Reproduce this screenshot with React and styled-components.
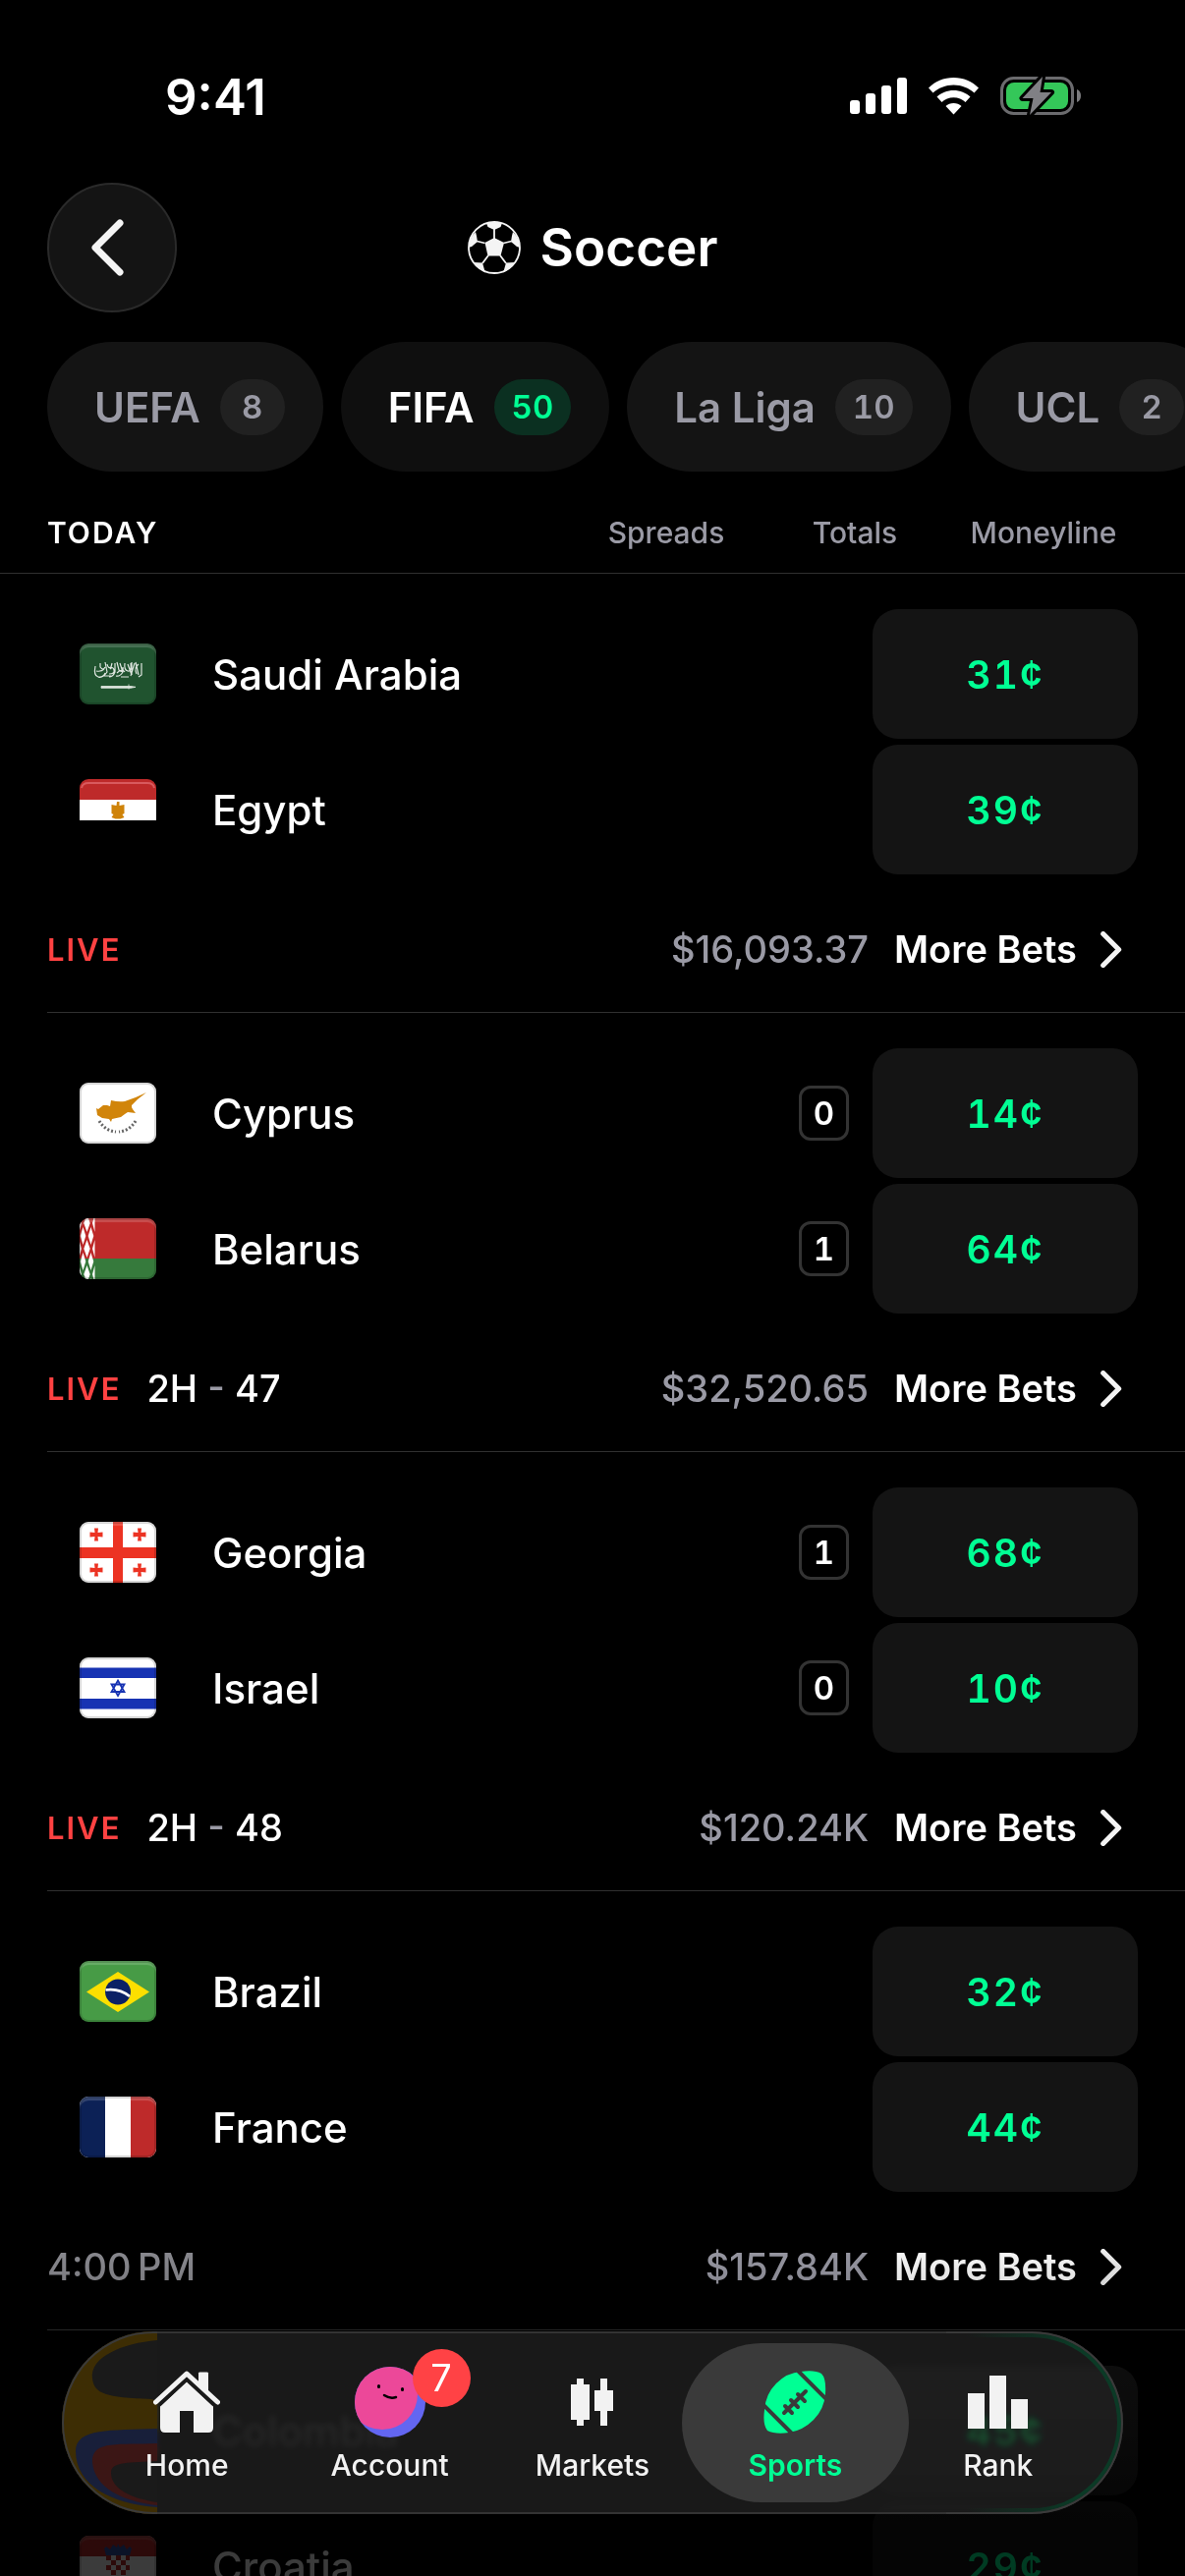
import { useState } from "react";
import styled, { createGlobalStyle } from "styled-components";

const GlobalStyle = createGlobalStyle`
  * {
    box-sizing: border-box;
  }
  body {
    margin: 0;
    background: #000;
    color: #fff;
    font-family: Inter, "Liberation Sans", sans-serif;
  }
  button {
    font-family: inherit;
    color: inherit;
    border: none;
    padding: 0;
    cursor: pointer;
  }
`;

const Screen = styled.div`
  position: relative;
  display: flex;
  flex-direction: column;
  height: 100vh;
  overflow: hidden;
  background: #000;
`;

/* ---------- status bar ---------- */

const StatusBar = styled.div`
  display: flex;
  flex-shrink: 0;
  justify-content: space-between;
  align-items: center;
  height: 174px;
  padding: 22px 105px 0 168px;
`;

const Clock = styled.span`
  font-size: 51px;
  font-weight: 600;
`;

const StatusIcons = styled.div`
  display: flex;
  align-items: center;
  gap: 22px;
`;

/* ---------- header ---------- */

const Header = styled.header`
  display: grid;
  flex-shrink: 0;
  grid-template-columns: 1fr auto 1fr;
  align-items: center;
  margin-top: 12px;
  padding: 0 48px;
`;

const BackButton = styled.button`
  display: flex;
  align-items: center;
  justify-content: center;
  width: 132px;
  height: 132px;
  padding-right: 10px;
  border-radius: 50%;
  border: 2px solid #2a2a2a;
  background: #141414;
`;

const Title = styled.h1`
  display: flex;
  align-items: center;
  gap: 20px;
  margin: 0;
  font-size: 53px;
  font-weight: 600;
`;

const Chips = styled.nav`
  display: flex;
  flex-shrink: 0;
  gap: 18px;
  margin-top: 30px;
  padding-left: 48px;
  overflow: hidden;
`;

const Chip = styled.button`
  display: flex;
  flex-shrink: 0;
  align-items: center;
  gap: 20px;
  height: 132px;
  padding: 0 39px 0 48px;
  border-radius: 66px;
  background: ${({ $active }) => ($active ? "#0f0f0f" : "#141414")};
  color: ${({ $active }) => ($active ? "#fff" : "#9a9aa5")};
  font-size: 42px;
  font-weight: 600;
`;

const Count = styled.span`
  min-width: 66px;
  padding: 0 18px;
  border-radius: 29px;
  background: ${({ $active }) => ($active ? "#0b3021" : "#212121")};
  color: ${({ $active }) => ($active ? "#00ff94" : "#9a9aa5")};
  font-size: 33px;
  font-weight: 600;
  font-variant-numeric: tabular-nums;
  line-height: 57px;
  text-align: center;
`;

/* ---------- list ---------- */

const Columns = styled.div`
  display: flex;
  flex-shrink: 0;
  align-items: center;
  height: 84px;
  margin-top: 20px;
  padding: 0 48px;
  border-bottom: 1px solid #303030;
`;

const DayLabel = styled.h2`
  flex: 1;
  margin: 0;
  font-size: 30px;
  font-weight: 600;
  letter-spacing: 2px;
`;

const ColumnLabel = styled.span`
  width: 192px;
  color: #9a9aa5;
  font-size: 30px;
  font-weight: 500;
  text-align: center;
`;

const Games = styled.main`
  flex: 1;
  min-height: 0;
  overflow: hidden;
`;

const Game = styled.section`
  margin-left: 48px;
  padding-top: 36px;
  border-bottom: 1px solid #303030;
`;

const Teams = styled.div`
  display: flex;
  flex-direction: column;
  gap: 6px;
`;

const Team = styled.div`
  display: flex;
  align-items: center;
  height: 132px;
  padding: 0 48px 0 33px;
`;

const Flag = styled.div`
  position: relative;
  width: 78px;
  height: 62px;
  border-radius: 9px;
  overflow: hidden;

  svg {
    display: block;
  }
  &::after {
    content: "";
    position: absolute;
    inset: 0;
    border-radius: 9px;
    box-shadow: ${({ $flat }) =>
      $flat
        ? "none"
        : "inset 0 0 0 2px rgba(0, 0, 0, 0.16), inset 0 4px 1px rgba(255, 255, 255, 0.18)"};
  }
`;

const TeamName = styled.span`
  flex: 1;
  margin-left: 57px;
  font-size: 42px;
  font-weight: 500;
  opacity: ${({ $faint }) => ($faint ? 0.3 : 1)};
`;

const Score = styled.span`
  width: 51px;
  margin-right: 24px;
  border: 3px solid #333;
  border-radius: 12px;
  font-size: 33px;
  font-weight: 600;
  font-variant-numeric: tabular-nums;
  line-height: 50px;
  text-align: center;
`;

const Price = styled.button`
  width: 270px;
  height: 132px;
  border-radius: 26px;
  background: #141414;
  color: #00ff94;
  font-size: 39px;
  font-weight: 600;
  font-variant-numeric: tabular-nums;
  letter-spacing: 2px;
`;

const GameFooter = styled.div`
  display: flex;
  align-items: center;
  height: 128px;
  margin-top: 12px;
  padding-right: 64px;
  font-size: 38px;
`;

const Live = styled.span`
  margin-right: 26px;
  color: #ff4242;
  font-size: 31px;
  font-weight: 600;
  letter-spacing: 2px;
`;

const Period = styled.span`
  flex: 1;
  color: ${({ $muted }) => ($muted ? "#8c8c92" : "#fff")};
  font-weight: 500;

  i {
    color: #9a9aa5;
    font-style: normal;
  }
`;

const Volume = styled.span`
  margin-right: 26px;
  color: #9a9aa5;
  font-weight: 500;
`;

const MoreBets = styled.button`
  display: flex;
  align-items: center;
  gap: 24px;
  background: none;
  font-size: 38px;
  font-weight: 600;
`;

const Fade = styled.div`
  position: absolute;
  inset: auto 0 0;
  height: 342px;
  background: linear-gradient(rgba(0, 0, 0, 0), rgba(0, 0, 0, 0.77) 86%);
  pointer-events: none;
`;

/* ---------- tab bar ---------- */

const TabBar = styled.nav`
  position: absolute;
  right: 63px;
  bottom: 63px;
  left: 63px;
  display: grid;
  grid-template-columns: repeat(5, 1fr);
  height: 186px;
  padding: 12px 24px;
  border-radius: 93px;
  background: rgba(34, 34, 34, 0.75);
  box-shadow: inset 0 0 0 2px #333;
  backdrop-filter: blur(3px) saturate(1.6) brightness(1.5);
  overflow: hidden;
`;

const Lens = styled.svg`
  position: absolute;
  top: 0;
  ${({ $side }) => $side}: 0;
`;

const Tab = styled.a`
  position: relative;
  display: flex;
  flex-direction: column;
  align-items: center;
  gap: 8px;
  margin: ${({ $active }) => ($active ? "0 -12px" : "0")};
  padding-top: 22px;
  border-radius: 81px;
  background: ${({ $active }) => ($active ? "#3a3a3a" : "none")};
  color: ${({ $active }) => ($active ? "#00ff94" : "#f2f2f2")};
  font-size: 30px;
  font-weight: ${({ $active }) => ($active ? 600 : 500)};
  line-height: 36px;
  text-decoration: none;
`;

const TabIcon = styled.span`
  position: relative;
  display: flex;
  align-items: center;
  justify-content: center;
  width: 72px;
  height: 76px;
`;

const Badge = styled.span`
  position: absolute;
  top: -16px;
  left: 59px;
  width: 59px;
  border-radius: 50%;
  background: #ff4245;
  color: #fff;
  font-size: 38px;
  font-weight: 400;
  line-height: 59px;
  text-align: center;
`;

/* ---------- flags ---------- */

const FlagSvg = ({ children }) => (
  <svg width="78" height="62" viewBox="0 0 78 62">
    {children}
  </svg>
);

const georgiaCross = (x, y) => (
  <path
    d={`M${x - 2} ${y - 6.5}h4l-.5 4.5 5-.5v5l-5-.5.5 4.500h-4l.5-4.500-5 .5v-5l5 .5z`}
    fill="#ec3323"
  />
);

const belarusDiamonds = [5, 31, 57].map(
  (y) =>
    `M7.500 ${y - 9}l3.200 9-3.200 9-3.200-9z` +
    `M3.500 ${y + 4}l2.800 9-2.800 9-2.800-9zM11.500 ${y + 4}l2.800 9-2.800 9-2.800-9z` +
    `M0 ${y - 7}l2 7-2 7zM15.500 ${y - 9}v18l-2.500-9z`
);

const flags = {
  "Saudi Arabia": (
    <>
      <rect width="78" height="62" fill="#20532f" />
      <path
        d="M16 23q-2 10 3 11t7-4M17 28q5 1 8-2M21 20v4q3 4 5 0M26 19l2 10q-5 7-9 5M28 21q1 5 4 3l1-4M31 26q3-3 4 1t-5 4M36 20v9q-2 5-6 5M38 19l2 8q5 4 4-3M41 20l3 9q-3 5-7 4M38 30q5-5 8-1M46 20q-1 7 3 8t3-8M49 21l4 11M53 19v13M56 20l-4 13M57 19l3 13M60 21q-5 4-2 10M63 20v12l-3 2M24 33h8M42 34h8"
        fill="none"
        stroke="#dfe6e0"
        strokeWidth="1.200"
      />
      <path d="M22 43.500h30l5 .8-5 1H22zM50 41.500v5" stroke="#dfe6e0" strokeWidth=".8" fill="#dfe6e0" />
    </>
  ),
  Egypt: (
    <>
      <rect width="78" height="62" fill="#000" />
      <rect width="78" height="21" fill="#be2a2a" />
      <path d="M2 9q1-5 7-5h60q6 0 7 5" fill="none" stroke="#d85a5e" strokeWidth="2" />
      <rect y="21" width="78" height="21" fill="#fff" />
      <path
        d="M38 23h2.500v4l5-1v9l-2 1 2 3-4 1.500h-5l-4-1.500 2-3-2-1v-9l5 1z"
        fill="#cf8309"
      />
    </>
  ),
  Cyprus: (
    <>
      <rect width="78" height="62" fill="#fff" />
      <path
        d="M17 26l2 1 5-4h4l3 1 1-6q8 2 14 1l11-4 11-5-9 7-6 6v2l1 2 3 4-8-1-3 2-4 3-9 2-1 3-2-3-7-1-5-3z"
        fill="#d1850b"
      />
      <path d="M20 39q6 10 17 11M57 39q-6 10-17 11" fill="none" stroke="#666" strokeWidth="3" strokeDasharray="2 2" />
    </>
  ),
  Belarus: (
    <>
      <rect width="78" height="42" fill="#be2a2a" />
      <rect y="41" width="78" height="21" fill="#367a3c" />
      <path d={belarusDiamonds.join("")} fill="#fff" />
    </>
  ),
  Georgia: (
    <>
      <rect width="78" height="62" fill="#fff" />
      <path d="M34 0h10v62H34zM0 26h78v11H0z" fill="#ec3323" />
      {georgiaCross(17, 13)}
      {georgiaCross(61, 13)}
      {georgiaCross(17, 49)}
      {georgiaCross(61, 49)}
    </>
  ),
  Israel: (
    <>
      <rect width="78" height="62" fill="#fff" />
      <path d="M0 10.500h78v10.500H0zM0 42h78v10.500H0z" fill="#1733b3" />
      <path d="M39 23.500l6.500 11.500h-13zM39 39l6.500-11.500h-13z" fill="none" stroke="#1733b3" strokeWidth="1.800" />
    </>
  ),
  Brazil: (
    <>
      <rect width="78" height="62" fill="#479b46" />
      <path d="M39 11l32 20.500L39 52 7 31.500z" fill="#fcdf00" />
      <circle cx="39" cy="31.500" r="13" fill="#0b2166" />
      <path d="M26.500 29.500q14-2 24.500 6.500" fill="none" stroke="#fff" strokeWidth="2.600" />
    </>
  ),
  France: (
    <>
      <rect width="78" height="62" fill="#fff" />
      <rect width="26" height="62" fill="#0c2156" />
      <rect x="52" width="26" height="62" fill="#be2a2a" />
    </>
  ),
  Colombia: (
    <>
      <rect width="78" height="62" fill="#fcdf00" />
      <rect y="31" width="78" height="16" fill="#1733b3" />
      <rect y="46" width="78" height="16" fill="#be2a2a" />
    </>
  ),
  Croatia: (
    <>
      <rect width="78" height="62" fill="#fff" />
      <rect width="78" height="21" fill="#be2a2a" />
      <rect y="41" width="78" height="21" fill="#1733b3" />
      <path d="M27 20l-2-7 2-2 4 3 3-5 4 3 1-4 2 4 4-3 3 5 3-3 2 2-2 7z" fill="#2f50a8" />
      <path d="M27 20h24v21q-12 8-24 0z" fill="#fff" />
      <path
        d="M27 20h5v5h-5zM37 20h5v5h-5zM47 20h4v5h-4zM32 25h5v5h-5zM42 25h5v5h-5zM27 30h5v5h-5zM37 30h5v5h-5zM47 30h4v5h-4zM32 35h5v5h-5zM42 35h5v5h-5z"
        fill="#be2a2a"
      />
    </>
  ),
};

/* ---------- icons ---------- */

const SignalIcon = () => (
  <svg width="58" height="38" viewBox="0 0 58 38" fill="#fff">
    <rect x="0" y="23" width="10" height="14" rx="3" />
    <rect x="16" y="16" width="10" height="21" rx="3" />
    <rect x="32" y="8" width="10" height="29" rx="3" />
    <rect x="48" y="0" width="10" height="37" rx="3" />
  </svg>
);

const WifiIcon = () => (
  <svg width="51" height="38" viewBox="0 0 51 38" fill="#fff">
    <path d="M25.500 0C35.500 0 44.500 4 51 10.500l-4.500 5C41 10.500 33.500 7.500 25.500 7.500S10 10.500 4.500 15.500L0 10.500C6.500 4 15.500 0 25.500 0z" />
    <path d="M25.500 13c6.500 0 12.500 2.500 17 6.500l-5 5.500c-3-3-7.500-4.800-12-4.800S16.500 22 13.500 25l-5-5.500c4.500-4 10.500-6.500 17-6.500z" />
    <path d="M25.500 26c3 0 6 1 8 3l-8 8.500-8-8.500c2-2 5-3 8-3z" />
  </svg>
);

const BatteryIcon = () => (
  <svg width="83" height="42" viewBox="0 0 83 42">
    <rect x="1.500" y="2.500" width="72" height="36" rx="12" fill="none" stroke="#6b6b6e" strokeWidth="3" />
    <rect x="6" y="7" width="63" height="27" rx="8" fill="#34c759" />
    <path d="M78 14c3 1 4 4 4 6.500s-1 5.500-4 6.500z" fill="#7b7b7e" />
    <path
      d="M43 1L22.500 23h11L30 40l22-23H40.500z"
      fill="#808085"
      stroke="#000"
      strokeWidth="6"
      strokeLinejoin="round"
      paintOrder="stroke"
    />
  </svg>
);

const BallIcon = () => (
  <svg width="54" height="54" viewBox="0 0 54 54">
    <circle cx="27" cy="27" r="26" fill="#000" stroke="#f4f4f4" strokeWidth="1.800" />
    <g fill="#f4f4f4">
      <path d="M27 17l10 5-3.500 13.500h-13L17.500 22z" />
      <path d="M19 2l1.500 4L27 9l6.500-3L35 2q-8-2-16 0z" />
      <path d="M8 11l1 4 1 6-6 5-3 1Q1 18 8 11zM46 11l-1 4-1 6 6 5 3 1q0-9-7-16z" />
      <path d="M6 42l9 .5 2 7 1 3Q11 49 6 42zM48 42l-9 .5-2 7-1 3q7-3.500 12-10.500z" />
    </g>
    <path
      d="M27 8v10M36.500 22.500l8-2M17.500 22.500l-8-2M33 35l6 8M21 35l-6 8"
      stroke="#f4f4f4"
      strokeWidth="1.800"
    />
  </svg>
);

const Chevron = ({ width, height, left, weight }) => (
  <svg width={width} height={height} viewBox="0 0 34 58" fill="none">
    <path
      d={left ? "M30 4L5 29l25 25" : "M4 4l25 25L4 54"}
      stroke="#f4f4f4"
      strokeWidth={weight}
      strokeLinecap="round"
      strokeLinejoin="round"
    />
  </svg>
);

const HomeIcon = () => (
  <svg width="68" height="64" viewBox="0 0 68 64">
    <path
      d="M34 11.500l27 25V58q0 5-5 5H41V41H27v22H12q-5 0-5-5V36.500z"
      fill="currentColor"
    />
    <path d="M46 2.500q0-1 1.500-1h7q1.500 0 1.500 1v22l-10-10z" fill="currentColor" />
    <path
      d="M2.500 32L34 3l31.500 29"
      fill="none"
      stroke="currentColor"
      strokeWidth="5"
      strokeLinecap="round"
      strokeLinejoin="round"
    />
    <path d="M7 34.500L34 9l27 25.500" fill="none" stroke="#1a1a1a" strokeWidth="3" />
  </svg>
);

const AccountIcon = () => (
  <svg width="72" height="72" viewBox="0 0 72 72">
    <clipPath id="avatar">
      <circle cx="36" cy="36" r="36" />
    </clipPath>
    <g clipPath="url(#avatar)">
      <rect width="72" height="72" fill="#6366f1" />
      <circle cx="28" cy="28" r="36" fill="#ec4899" />
    </g>
    <rect x="23" y="18" width="3" height="4" rx="1.500" fill="#000" />
    <rect x="47" y="21" width="3" height="4" rx="1.500" fill="#000" />
    <path d="M30 29q6 4 12 2" fill="none" stroke="#000" strokeWidth="2.500" strokeLinecap="round" />
  </svg>
);

const MarketsIcon = () => (
  <svg width="43" height="48" viewBox="0 0 43 48" fill="currentColor">
    <path d="M6 0h7v6h6v36h-6v6H6v-6H0V6h6z" />
    <path d="M30 0h7v12h6v21h-6v15h-7V33h-6V12h6z" />
  </svg>
);

const SportsIcon = () => (
  <svg width="64" height="64" viewBox="0 0 64 64">
    <path
      d="M38 1Q52-1 59 3q5 5 4 20-1 16-12 27T26 63Q12 65 4 61-1 55 1 40 2 24 13 13T38 1z"
      fill="currentColor"
    />
    <g stroke="#3a3a3a" fill="none">
      <path d="M35 0l30 30M-1 34l30 30" strokeWidth="4" />
      <path
        d="M21 43l22-22M22 36l7 7M28 30l7 7M35 24l7 7"
        strokeWidth="4"
        strokeLinecap="round"
      />
    </g>
  </svg>
);

const RankIcon = () => (
  <svg width="61" height="54" viewBox="0 0 61 54" fill="currentColor">
    <path d="M0 18h17v36H0zM22 0h17v54H22zM44 24h17v30H44z" />
  </svg>
);

/* ---------- data ---------- */

const leagues = [
  { name: "UEFA", count: 8 },
  { name: "FIFA", count: 50 },
  { name: "La Liga", count: 10 },
  { name: "UCL", count: 2 },
];

const games = [
  {
    teams: [
      { name: "Saudi Arabia", price: 31 },
      { name: "Egypt", price: 39 },
    ],
    live: true,
    volume: "$16,093.37",
  },
  {
    teams: [
      { name: "Cyprus", price: 14, score: 0 },
      { name: "Belarus", price: 64, score: 1 },
    ],
    live: true,
    minute: 47,
    volume: "$32,520.65",
  },
  {
    teams: [
      { name: "Georgia", price: 68, score: 1 },
      { name: "Israel", price: 10, score: 0 },
    ],
    live: true,
    minute: 48,
    volume: "$120.24K",
  },
  {
    teams: [
      { name: "Brazil", price: 32 },
      { name: "France", price: 44 },
    ],
    time: "4:00\u202fPM",
    volume: "$157.84K",
  },
  {
    teams: [
      { name: "Colombia", price: 45, faint: true },
      { name: "Croatia", price: 29 },
    ],
  },
];

const tabs = [
  { name: "Home", icon: <HomeIcon /> },
  { name: "Account", icon: <AccountIcon />, badge: 7 },
  { name: "Markets", icon: <MarketsIcon /> },
  { name: "Sports", icon: <SportsIcon /> },
  { name: "Rank", icon: <RankIcon /> },
];

function GameCard({ game }) {
  return (
    <Game>
      <Teams>
        {game.teams.map((team) => (
          <Team key={team.name}>
            <Flag $flat={team.name === "Egypt"}>
              <FlagSvg>{flags[team.name]}</FlagSvg>
            </Flag>
            <TeamName $faint={team.faint}>{team.name}</TeamName>
            {team.score !== undefined && <Score>{team.score}</Score>}
            <Price>{team.price}¢</Price>
          </Team>
        ))}
      </Teams>
      {game.volume && (
        <GameFooter>
          {game.live && <Live>LIVE</Live>}
          <Period $muted={!game.live}>
            {game.minute && (
              <>
                2H <i>-</i> {game.minute}
              </>
            )}
            {game.time}
          </Period>
          <Volume>{game.volume}</Volume>
          <MoreBets>
            More Bets
            <Chevron width={22} height={37} weight={8} />
          </MoreBets>
        </GameFooter>
      )}
    </Game>
  );
}

function App() {
  const [league, setLeague] = useState("FIFA");
  const [tab, setTab] = useState("Sports");

  return (
    <Screen>
      <GlobalStyle />
      <StatusBar>
        <Clock>9:41</Clock>
        <StatusIcons>
          <SignalIcon />
          <WifiIcon />
          <BatteryIcon />
        </StatusIcons>
      </StatusBar>

      <Header>
        <BackButton aria-label="Back">
          <Chevron width={34} height={58} left weight={7} />
        </BackButton>
        <Title>
          <BallIcon />
          Soccer
        </Title>
      </Header>

      <Chips>
        {leagues.map(({ name, count }) => (
          <Chip key={name} $active={name === league} onClick={() => setLeague(name)}>
            {name}
            <Count $active={name === league}>{count}</Count>
          </Chip>
        ))}
      </Chips>

      <Columns>
        <DayLabel>TODAY</DayLabel>
        <ColumnLabel>Spreads</ColumnLabel>
        <ColumnLabel>Totals</ColumnLabel>
        <ColumnLabel>Moneyline</ColumnLabel>
      </Columns>

      <Games>
        {games.map((game) => (
          <GameCard key={game.teams[0].name} game={game} />
        ))}
      </Games>

      <Fade />

      <TabBar>
        <Lens $side="left" width="97" height="186" viewBox="0 0 97 186">
          <rect width="97" height="186" fill="#1a1a1a" />
          <path d="M0 0h97v9C62 12 28 26 31 48c2 16 14 19 60 21q6 1 6 6v111H0z" fill="#3d2d04" />
          <path d="M97 99C50 101 14 98 14 122c0 34 36 54 83 57z" fill="#181f3a" />
          <path d="M97 114C60 116 30 110 31 133c2 26 30 40 66 44z" fill="#3b1615" />
          <path d="M97 132C70 134 50 132 50 144c0 16 20 26 47 30z" fill="#1a1a1a" />
          <path d="M97 1H93a92 92 0 0 0 0 184h4" fill="none" stroke="#3a3a3a" strokeWidth="2" />
        </Lens>
        <Lens $side="right" width="180" height="186" viewBox="0 0 180 186" fill="none">
          <linearGradient id="rim" gradientUnits="userSpaceOnUse" x1="20" y1="0" x2="130" y2="0">
            <stop stopColor="#0b3a26" stopOpacity="0" />
            <stop offset="1" stopColor="#0b3a26" />
          </linearGradient>
          <path d="M20 4h67a89 89 0 0 1 0 178H20" stroke="url(#rim)" strokeWidth="4" />
          <path d="M0 1h87a92 92 0 0 1 0 184H0" stroke="#3a3a3a" strokeWidth="2" />
        </Lens>
        {tabs.map(({ name, icon, badge }) => (
          <Tab key={name} href="#" $active={name === tab} onClick={() => setTab(name)}>
            <TabIcon>
              {icon}
              {badge && <Badge>{badge}</Badge>}
            </TabIcon>
            {name}
          </Tab>
        ))}
      </TabBar>
    </Screen>
  );
}

export default App;
